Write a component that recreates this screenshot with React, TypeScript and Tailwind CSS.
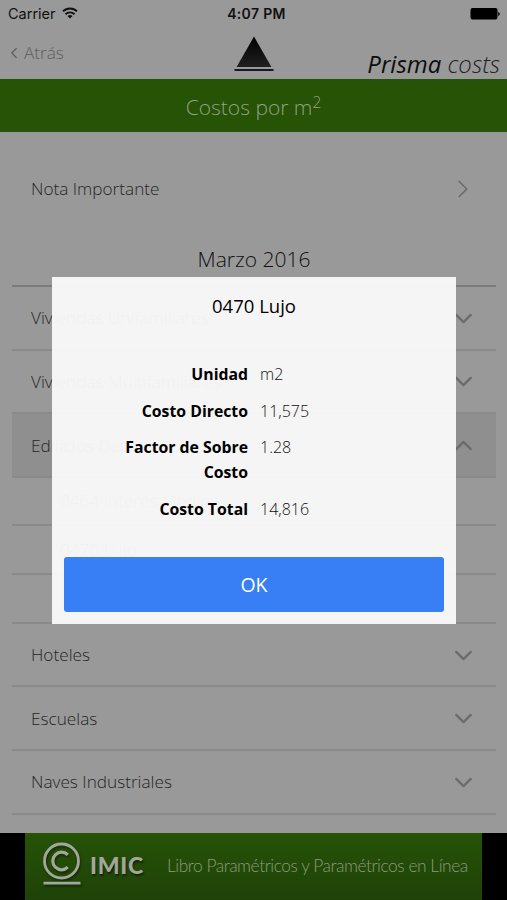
import { ChevronDown, ChevronLeft, ChevronRight, ChevronUp } from 'lucide-react'
import clsx from 'clsx'

const details = [
  { label: 'Unidad', value: 'm2' },
  { label: 'Costo Directo', value: '11,575' },
  { label: 'Factor de Sobre Costo', value: '1.28' },
  { label: 'Costo Total', value: '14,816' },
]

function StatusBar() {
  return (
    <div className="grid h-7 grid-cols-3 items-center pl-2 pr-[7px] font-['Inter',sans-serif] text-[14px] text-[#111]">
      <div className="flex items-center gap-[6px]">
        <span className="text-[14.5px]">Carrier</span>
        <svg viewBox="0 0 16 12" className="mt-[-2px] h-3 w-4" fill="none" stroke="currentColor" strokeWidth="1.9">
          <path d="M1 4.4a10 10 0 0 1 14 0" />
          <path d="M3.5 7.2a6.4 6.4 0 0 1 9 0" />
          <path d="M8 11.6 5.5 9.1a3.6 3.6 0 0 1 5 0Z" fill="currentColor" stroke="none" />
        </svg>
      </div>
      <span className="ml-[5px] mt-[-1px] text-center text-[14px] font-semibold tracking-[0.35px]">4:07 PM</span>
      <svg viewBox="0 0 30 12" className="h-3 w-[30px] justify-self-end" fill="#000">
        <rect x="0.5" y="0" width="27" height="11.6" rx="2" />
        <path d="M28.2 4q1.6.6 1.6 2T28.2 8Z" />
      </svg>
    </div>
  )
}

function TopNav() {
  return (
    <div className="flex h-[51px] justify-between pl-2 pr-[7px]">
      <div className="flex h-[49px] w-[226px] items-center text-[17.2px] font-light text-[#606060]">
        <ChevronLeft size={18} strokeWidth={1.8} className="-ml-[3px] mr-[1px]" />
        <span>Atrás</span>
      </div>
      <svg viewBox="0 0 40 36" className="mt-[8px] h-9 w-10 shrink-0">
        <defs>
          <linearGradient id="prism" x1="0" y1="0" x2="0" y2="1">
            <stop offset="0" stopColor="#000" />
            <stop offset="1" stopColor="#202020" />
          </linearGradient>
        </defs>
        <path d="M20 .6 37.4 31H2.6Z" fill="url(#prism)" />
        <path d="M.5 34h39" stroke="#1a1a1a" strokeWidth="1.9" />
      </svg>
      <div className="flex w-[226px] items-end justify-end whitespace-nowrap text-[24px] italic leading-[30px] text-[#0d0d0d]">
        <span>Prisma&nbsp;</span>
        <span className="font-light text-[#222]">costs</span>
      </div>
    </div>
  )
}

type RowProps = {
  title: string
  open?: boolean
}

function CategoryRow({ title, open = false }: RowProps) {
  const Icon = open ? ChevronUp : ChevronDown
  return (
    <div
      className={clsx(
        'flex h-[63.6px] items-center justify-between border-b-2 border-[#8a8a8a] pl-[19px] pr-[18px]',
        open && 'bg-[#8f8f8f]',
      )}
    >
      <span className="mt-[1px]">{title}</span>
      <Icon size={29} strokeWidth={1.9} className="mt-[1px] text-[#6c6c6c]" />
    </div>
  )
}

function SubRow({ title = '' }: { title?: string }) {
  return <div className="flex h-[48.7px] items-center border-b-2 border-[#8a8a8a] pl-12">{title}</div>
}

function Banner() {
  return (
    <footer className="flex h-[67px] justify-center bg-black">
      <div className="flex w-[457px] items-center bg-linear-to-b from-[#265306] to-[#1f4208]">
        <svg viewBox="0 0 40 46" className="ml-[17px] mt-[-3px] h-[46px] w-10 shrink-0 drop-shadow-[1px_2px_1px_rgba(0,0,0,0.4)]" fill="none" stroke="#a2a69c">
          <circle cx="19.5" cy="19" r="17" strokeWidth="2.8" />
          <path d="M25.8 12.8a8.8 8.8 0 1 0 0 12.4" strokeWidth="3.2" />
          <path d="M1.5 41.2h37" strokeWidth="2.8" />
        </svg>
        <span className="ml-[8px] mt-[-2px] w-[58px] shrink-0 whitespace-nowrap font-['Lato',sans-serif] text-[23px] font-black tracking-[0.7px] text-[#a2a69c] [text-shadow:1px_2px_2px_rgba(0,0,0,0.5)]">
          IMIC
        </span>
        <span className="ml-[19px] whitespace-nowrap font-['Lato',sans-serif] text-[17.4px] font-light tracking-[-0.48px] text-[#8a9a7e]">
          Libro Paramétricos y Paramétricos en Línea
        </span>
      </div>
    </footer>
  )
}

function CostDialog() {
  return (
    <div className="absolute left-[52px] top-[277px] flex h-[347px] w-[404px] flex-col bg-[#f8f8f8]/97 px-3 pb-3 text-[16px] text-black">
      <h2 className="mt-[14px] text-center text-[18.5px] leading-[30px]">0470 Lujo</h2>
      <dl className="mt-[41px] flex flex-col gap-[12.3px] leading-[24.4px]">
        {details.map(({ label, value }) => (
          <div key={label} className="flex">
            <dt className="w-[184px] pl-10 text-right text-[15.8px] font-bold">{label}</dt>
            <dd className="ml-[12px] font-light text-[#111]">{value}</dd>
          </div>
        ))}
      </dl>
      <button className="mt-auto h-[55px] rounded-[3px] bg-[#387ef5] text-[19.5px] text-white">OK</button>
    </div>
  )
}

export default function App() {
  return (
    <div className="relative flex h-[900px] w-[507px] flex-col overflow-hidden bg-[#999] font-['Open_Sans','Noto_Sans',sans-serif]">
      <StatusBar />
      <TopNav />
      <h1 className="h-[53px] bg-[#265306] text-center text-[21px] font-light leading-[56px] text-[#93a183]">
        Costos por m<sup className="top-[-0.45em] text-[15.5px]">2</sup>
      </h1>

      <main className="flex-1 pl-3 pr-[11px] text-[17.2px] font-light text-[#262626]">
        <div className="flex h-[114px] items-center justify-between pl-[19px] pr-[18px]">
          <span>Nota Importante</span>
          <ChevronRight size={30} strokeWidth={1.4} className="text-[#6c6c6c]" />
        </div>
        <h2 className="h-[41px] border-b-2 border-[#7b7b7b] text-center text-[21px] leading-[27px] text-[#111]">
          Marzo 2016
        </h2>
        <CategoryRow title="Viviendas Unifamiliares" />
        <CategoryRow title="Viviendas Multifamiliares" />
        <CategoryRow title="Edificios Deptos" open />
        <SubRow title="0464 Interés Medio" />
        <SubRow title="0470 Lujo" />
        <SubRow />
        <CategoryRow title="Hoteles" />
        <CategoryRow title="Escuelas" />
        <CategoryRow title="Naves Industriales" />
      </main>

      <Banner />
      <CostDialog />
    </div>
  )
}
